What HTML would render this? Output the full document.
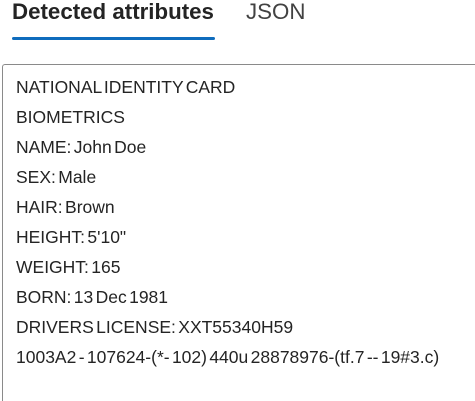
<!DOCTYPE html>
<html style="overflow:hidden;height:401px"><head><style>
body{margin:0;width:475px;height:401px;overflow:hidden;background:#fff;font-family:"Liberation Sans",sans-serif;color:#242424;position:relative}
.t1{position:absolute;left:12px;top:-1px;font-size:22.3px;font-weight:bold;line-height:26px;color:#242424}
.t2{position:absolute;left:246px;top:-1px;font-size:22.3px;line-height:26px;color:#424242}
.ul{position:absolute;left:12px;top:37px;width:203px;height:3px;background:#0f6cbd;border-radius:2px}
.box{position:absolute;left:2px;top:64px;width:473px;height:337px;border:1px solid #8a8a8a;border-right:none;border-bottom:none;border-radius:3px 0 0 0;box-sizing:border-box}
.lines{position:absolute;left:16px;top:72px;font-size:17.5px;line-height:30px;word-spacing:-2.5px;white-space:nowrap}
</style></head><body>
<div class="t1">Detected attributes</div>
<div class="t2">JSON</div>
<div class="ul"></div>
<div class="box"></div>
<div class="lines">
NATIONAL IDENTITY CARD<br>
BIOMETRICS<br>
NAME: John Doe<br>
SEX: Male<br>
HAIR: Brown<br>
HEIGHT: 5'10"<br>
WEIGHT: 165<br>
BORN: 13 Dec 1981<br>
DRIVERS LICENSE: XXT55340H59<br>
1003A2 - 107624-(*- 102) 440u 28878976-(tf.7 -- 19#3.c)
</div>
</body></html>
